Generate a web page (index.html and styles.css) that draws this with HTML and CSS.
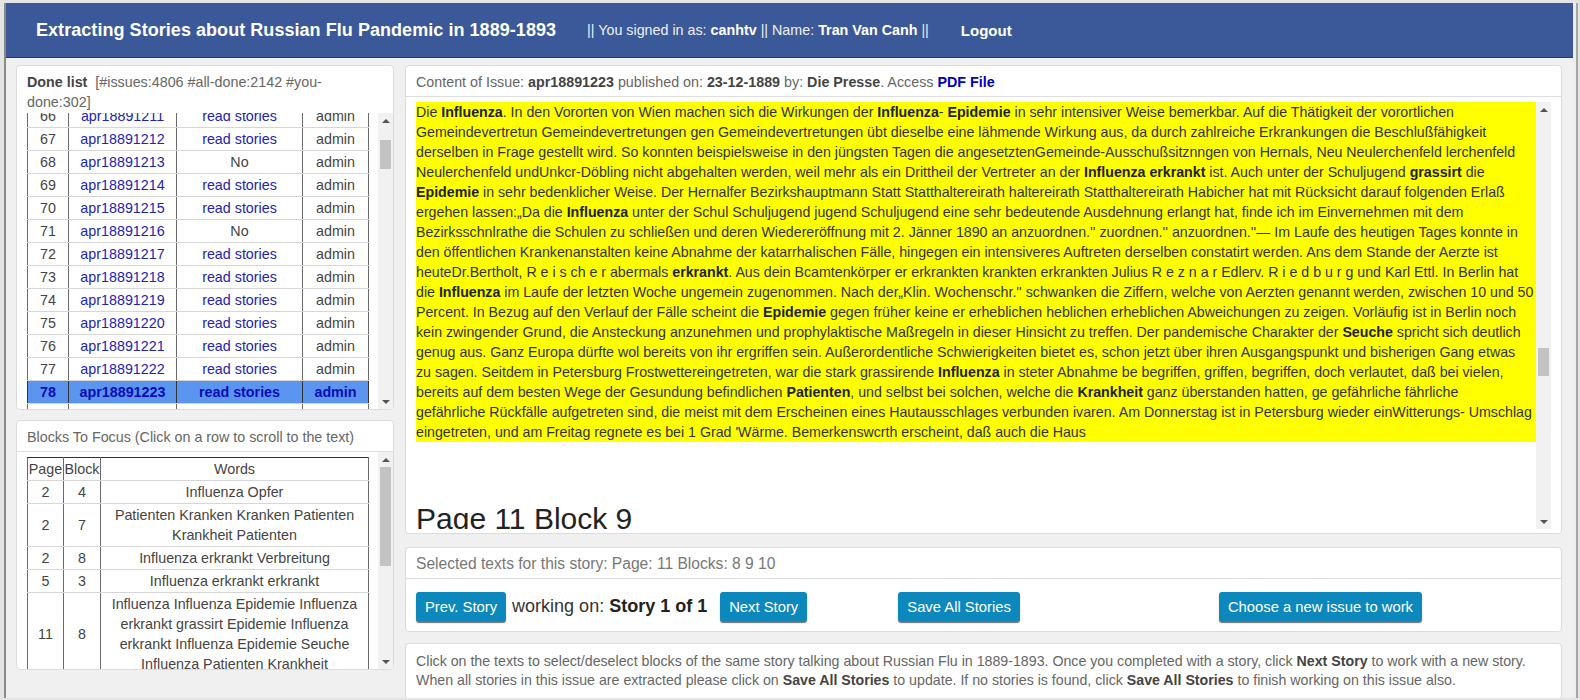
FILE: index.html
```html
<!DOCTYPE html>
<html lang="de">
<head>
<meta charset="utf-8">
<title>Extracting Stories about Russian Flu Pandemic in 1889-1893</title>
<link rel="stylesheet" href="styles.css">
</head>
<body>
<div class="app">
  <header class="topbar">
    <h1 class="brand">Extracting Stories about Russian Flu Pandemic in 1889-1893</h1>
    <div class="user">|| You signed in as: <b>canhtv</b> || Name: <b>Tran Van Canh</b> ||</div>
    <a class="logout">Logout</a>
  </header>

  <main class="content">
    <aside class="side">
      <section class="panel done-panel">
        <div class="panel-head done-head"><b>Done list</b>&nbsp; [#issues:4806 #all-done:2142 #you-done:302]</div>
        <div class="scroller">
          <div class="viewport">
            <table class="grid done-table">
              <colgroup><col class="c-num"><col class="c-issue"><col class="c-status"><col class="c-user"></colgroup>
              <tbody>
                <tr><td>66</td><td><a>apr18891211</a></td><td><a>read stories</a></td><td>admin</td></tr>
                <tr><td>67</td><td><a>apr18891212</a></td><td><a>read stories</a></td><td>admin</td></tr>
                <tr><td>68</td><td><a>apr18891213</a></td><td>No</td><td>admin</td></tr>
                <tr><td>69</td><td><a>apr18891214</a></td><td><a>read stories</a></td><td>admin</td></tr>
                <tr><td>70</td><td><a>apr18891215</a></td><td><a>read stories</a></td><td>admin</td></tr>
                <tr><td>71</td><td><a>apr18891216</a></td><td>No</td><td>admin</td></tr>
                <tr><td>72</td><td><a>apr18891217</a></td><td><a>read stories</a></td><td>admin</td></tr>
                <tr><td>73</td><td><a>apr18891218</a></td><td><a>read stories</a></td><td>admin</td></tr>
                <tr><td>74</td><td><a>apr18891219</a></td><td><a>read stories</a></td><td>admin</td></tr>
                <tr><td>75</td><td><a>apr18891220</a></td><td><a>read stories</a></td><td>admin</td></tr>
                <tr><td>76</td><td><a>apr18891221</a></td><td><a>read stories</a></td><td>admin</td></tr>
                <tr><td>77</td><td><a>apr18891222</a></td><td><a>read stories</a></td><td>admin</td></tr>
                <tr class="sel"><td>78</td><td><a>apr18891223</a></td><td><a>read stories</a></td><td>admin</td></tr>
                <tr><td>79</td><td><a>apr18891224</a></td><td><a>read stories</a></td><td>admin</td></tr>
              </tbody>
            </table>
          </div>
          <div class="sbar">
            <div class="sb-btn sb-up"></div>
            <div class="sb-track"><div class="sb-thumb thumb-done"></div></div>
            <div class="sb-btn sb-down"></div>
          </div>
        </div>
      </section>

      <section class="panel blocks-panel">
        <div class="panel-head">Blocks To Focus (Click on a row to scroll to the text)</div>
        <div class="scroller">
          <div class="viewport blocks-view">
            <table class="grid blocks-table">
              <colgroup><col class="c-page"><col class="c-block"><col class="c-words"></colgroup>
              <tbody>
                <tr class="hd"><td>Page</td><td>Block</td><td>Words</td></tr>
                <tr><td>2</td><td>4</td><td>Influenza Opfer</td></tr>
                <tr><td>2</td><td>7</td><td>Patienten Kranken Kranken Patienten Krankheit Patienten</td></tr>
                <tr><td>2</td><td>8</td><td>Influenza erkrankt Verbreitung</td></tr>
                <tr><td>5</td><td>3</td><td>Influenza erkrankt erkrankt</td></tr>
                <tr><td>11</td><td>8</td><td>Influenza Influenza Epidemie Influenza erkrankt grassirt Epidemie Influenza erkrankt Influenza Epidemie Seuche Influenza Patienten Krankheit</td></tr>
                <tr><td>11</td><td>9</td><td>Influenza Epidemie</td></tr>
              </tbody>
            </table>
          </div>
          <div class="sbar">
            <div class="sb-btn sb-up"></div>
            <div class="sb-track"><div class="sb-thumb thumb-blocks"></div></div>
            <div class="sb-btn sb-down"></div>
          </div>
        </div>
      </section>
    </aside>

    <div class="work">
      <section class="panel issue-panel">
        <div class="panel-head issue-head">Content of Issue: <b>apr18891223</b> published on: <b>23-12-1889</b> by: <b>Die Presse</b>. Access <a class="pdf">PDF File</a></div>
        <div class="scroller text-scroller">
          <div class="viewport text-view">
            <p class="block selected">Die <b>Influenza</b>. In den Vororten von Wien machen sich die Wirkungen der <b>Influenza</b>- <b>Epidemie</b> in sehr intensiver Weise bemerkbar. Auf die Thätigkeit der vorortlichen<br>Gemeindevertretun Gemeindevertretungen gen Gemeindevertretungen übt dieselbe eine lähmende Wirkung aus, da durch zahlreiche Erkrankungen die Beschlußfähigkeit<br>derselben in Frage gestellt wird. So konnten beispielsweise in den jüngsten Tagen die angesetztenGemeinde-Ausschußsitznngen von Hernals, Neu Neulerchenfeld lerchenfeld<br>Neulerchenfeld undUnkcr-Döbling nicht abgehalten werden, weil mehr als ein Drittheil der Vertreter an der <b>Influenza erkrankt</b> ist. Auch unter der Schuljugend <b>grassirt</b> die<br><b>Epidemie</b> in sehr bedenklicher Weise. Der Hernalfer Bezirkshauptmann Statt Statthaltereirath haltereirath Statthaltereirath Habicher hat mit Rücksicht darauf folgenden Erlaß<br>ergehen lassen:„Da die <b>Influenza</b> unter der Schul Schuljugend jugend Schuljugend eine sehr bedeutende Ausdehnung erlangt hat, finde ich im Einvernehmen mit dem<br>Bezirksschnlrathe die Schulen zu schließen und deren Wiedereröffnung mit 2. Jänner 1890 an anzuordnen.'' zuordnen.'' anzuordnen.''— Im Laufe des heutigen Tages konnte in<br>den öffentlichen Krankenanstalten keine Abnahme der katarrhalischen Fälle, hingegen ein intensiveres Auftreten derselben constatirt werden. Ans dem Stande der Aerzte ist<br>heuteDr.Bertholt, R e i s ch e r abermals <b>erkrankt</b>. Aus dein Bcamtenkörper er erkrankten krankten erkrankten Julius R e z n a r Edlerv. R i e d b u r g und Karl Ettl. In Berlin hat<br>die <b>Influenza</b> im Laufe der letzten Woche ungemein zugenommen. Nach der„Klin. Wochenschr.'' schwanken die Ziffern, welche von Aerzten genannt werden, zwischen 10 und 50<br>Percent. In Bezug auf den Verlauf der Fälle scheint die <b>Epidemie</b> gegen früher keine er erheblichen heblichen erheblichen Abweichungen zu zeigen. Vorläufig ist in Berlin noch<br>kein zwingender Grund, die Ansteckung anzunehmen und prophylaktische Maßregeln in dieser Hinsicht zu treffen. Der pandemische Charakter der <b>Seuche</b> spricht sich deutlich<br>genug aus. Ganz Europa dürfte wol bereits von ihr ergriffen sein. Außerordentliche Schwierigkeiten bietet es, schon jetzt über ihren Ausgangspunkt und bisherigen Gang etwas<br>zu sagen. Seitdem in Petersburg Frostwettereingetreten, war die stark grassirende <b>Influenza</b> in steter Abnahme be begriffen, griffen, begriffen, doch verlautet, daß bei vielen,<br>bereits auf dem besten Wege der Gesundung befindlichen <b>Patienten</b>, und selbst bei solchen, welche die <b>Krankheit</b> ganz überstanden hatten, ge gefährliche fährliche<br>gefährliche Rückfälle aufgetreten sind, die meist mit dem Erscheinen eines Hautausschlages verbunden ivaren. Am Donnerstag ist in Petersburg wieder einWitterungs- Umschlag<br>eingetreten, und am Freitag regnete es bei 1 Grad 'Wärme. Bemerkenswcrth erscheint, daß auch die Haus</p>
            <h3 class="block-title">Page 11 Block 9</h3>
          </div>
          <div class="sbar">
            <div class="sb-btn sb-up"></div>
            <div class="sb-track"><div class="sb-thumb thumb-text"></div></div>
            <div class="sb-btn sb-down"></div>
          </div>
        </div>
      </section>

      <section class="panel story-panel">
        <div class="panel-head selected-line">Selected texts for this story: Page: 11 Blocks: 8 9 10</div>
        <div class="actions">
          <button class="btn">Prev. Story</button>
          <span class="working">working on: <b>Story 1 of 1</b></span>
          <button class="btn btn-next">Next Story</button>
          <button class="btn btn-save">Save All Stories</button>
          <button class="btn btn-choose">Choose a new issue to work</button>
        </div>
      </section>

      <section class="panel help-panel">
        Click on the texts to select/deselect blocks of the same story talking about Russian Flu in 1889-1893. Once you completed with a story, click <b>Next Story</b> to work with a new story.<br>When all stories in this issue are extracted please click on <b>Save All Stories</b> to update. If no stories is found, click <b>Save All Stories</b> to finish working on this issue also.
      </section>
    </div>
  </main>
</div>
</body>
</html>
```

FILE: styles.css
```css
html, body {
  margin: 0;
  padding: 0;
  height: 100%;
}

body {
  background: #e4e4e4;
  font-family: "Liberation Sans", Arial, Helvetica, sans-serif;
  overflow: hidden;
}

.app {
  margin: 3px 0 0 4px;
  width: 1567px;
  height: 695px;
  border-left: 2px solid #8a8a8a;
  border-right: 3px solid #ededed;
  box-shadow: 2px 0 0 #a5a5a5;
  background: #f0f0f0;
  overflow: hidden;
  display: flex;
  flex-direction: column;
}

/* ---------- top bar ---------- */
.topbar {
  flex: none;
  height: 54px;
  border-bottom: 1px solid #283c68;
  background: #3b5998;
  display: flex;
  align-items: center;
  padding-left: 30px;
  color: #fff;
}

.brand {
  margin: 0;
  font-size: 18px;
  font-weight: bold;
  letter-spacing: 0.05px;
}

.user {
  margin-left: 31px;
  font-size: 14.3px;
  color: #eef0f5;
}

.user b {
  color: #fff;
}

.logout {
  margin-left: 32px;
  font-size: 15px;
  font-weight: bold;
  color: #fff;
}

/* ---------- layout ---------- */
.content {
  flex: 1;
  min-height: 0;
  display: flex;
  gap: 11px;
  padding: 7px 11px 0 10px;
}

.side {
  flex: none;
  width: 378px;
  display: flex;
  flex-direction: column;
  gap: 10px;
}

.work {
  flex: 1;
  min-width: 0;
  display: flex;
  flex-direction: column;
}

.panel {
  box-sizing: border-box;
  background: #fff;
  border: 1px solid #dcdcdc;
  border-radius: 4px;
  flex: none;
}

.panel-head {
  padding: 6px 10px 4px;
  font-size: 14.3px;
  line-height: 20px;
  color: #666;
  border-bottom: 1px solid #dedede;
}

.panel-head b {
  color: #444;
}

.scroller {
  flex: 1;
  min-height: 0;
  display: flex;
}

.viewport {
  flex: 1;
  min-width: 0;
  overflow: hidden;
  padding: 0 10px;
}

/* ---------- fake scrollbars ---------- */
.sbar {
  flex: none;
  width: 15px;
  background: #f1f1f1;
  display: flex;
  flex-direction: column;
}

.sb-btn {
  flex: none;
  height: 15px;
  display: flex;
  align-items: center;
  justify-content: center;
}

.sb-up::before {
  content: "";
  border-left: 4px solid transparent;
  border-right: 4px solid transparent;
  border-bottom: 4px solid #555;
}

.sb-down::before {
  content: "";
  border-left: 4px solid transparent;
  border-right: 4px solid transparent;
  border-top: 4px solid #555;
}

.sb-track {
  flex: 1;
  min-height: 0;
}

.sb-thumb {
  margin: 0 2px;
  background: #c3c3c3;
}

.thumb-done {
  margin-top: 12px;
  height: 29px;
}

.thumb-blocks {
  margin-top: 0;
  height: 99px;
}

.thumb-text {
  margin-top: 231px;
  height: 28px;
}

/* ---------- left panels ---------- */
.done-panel {
  height: 345px;
  display: flex;
  flex-direction: column;
}

.done-head {
  padding-bottom: 1px;
  border-bottom: none;
}

.blocks-panel {
  height: 250px;
  display: flex;
  flex-direction: column;
}

.blocks-view {
  padding-top: 5px;
}

.grid {
  width: 100%;
  table-layout: fixed;
  border-collapse: collapse;
  border: 1px solid #333;
  font-size: 14.3px;
  line-height: 20px;
  color: #444;
  text-align: center;
}

.grid td {
  padding: 1px 0;
  border-top: 1px solid #d6d6d6;
  border-bottom: 1px solid #d6d6d6;
  border-left: 1px solid #6a6a6a;
  border-right: 1px solid #6a6a6a;
  overflow: hidden;
}

.grid a {
  color: #2323b3;
}

.done-table {
  margin-top: -9px;
}

.c-num { width: 41px; }
.c-issue { width: 108px; }
.c-status { width: 126px; }
.c-user { width: 66px; }

.c-page { width: 36px; }
.c-block { width: 37px; }
.c-words { width: 268px; }

.grid .sel td {
  background: #5b95ef;
  color: #0b0bb8;
  font-weight: bold;
  border-left-color: #333;
  border-right-color: #333;
}

.grid .sel a {
  color: #0b0bb8;
}

.grid .hd td {
  border-top-color: #333;
}

/* ---------- issue text ---------- */
.issue-panel {
  height: 469px;
  display: flex;
  flex-direction: column;
}

.pdf {
  color: #0000c0;
  font-weight: bold;
}

.text-scroller {
  margin: 5px 10px 4px;
}

.text-view {
  padding: 0;
}

.block {
  margin: 0;
  font-size: 14.2px;
  line-height: 20px;
  color: #333;
  white-space: nowrap;
}

.block b {
  color: #222;
}

.selected {
  background: #ffff00;
}

.block-title {
  margin: 60px 0 0;
  font-size: 30px;
  line-height: 33px;
  font-weight: normal;
  color: #222;
}

/* ---------- story panel ---------- */
.story-panel {
  margin-top: 13px;
  height: 85px;
}

.selected-line {
  font-size: 15.6px;
  color: #777;
}

.actions {
  display: flex;
  align-items: center;
  padding: 13px 10px 10px;
}

.btn {
  height: 29px;
  padding: 0 9px;
  border: none;
  border-radius: 3px;
  background: #0d88bd;
  color: #fff;
  font-family: inherit;
  font-size: 14.8px;
  box-shadow: 0 2px 1px #6f6f6f;
}

.working {
  margin-left: 6px;
  font-size: 18px;
  color: #333;
}

.working b {
  color: #222;
}

.btn-next { margin-left: 13px; }
.btn-save { margin-left: 91px; }
.btn-choose { margin-left: 199px; }

/* ---------- help ---------- */
.help-panel {
  margin-top: 11px;
  padding: 8px 10px 9px;
  font-size: 14.2px;
  line-height: 19px;
  color: #666;
}

.help-panel b {
  color: #444;
}
```
